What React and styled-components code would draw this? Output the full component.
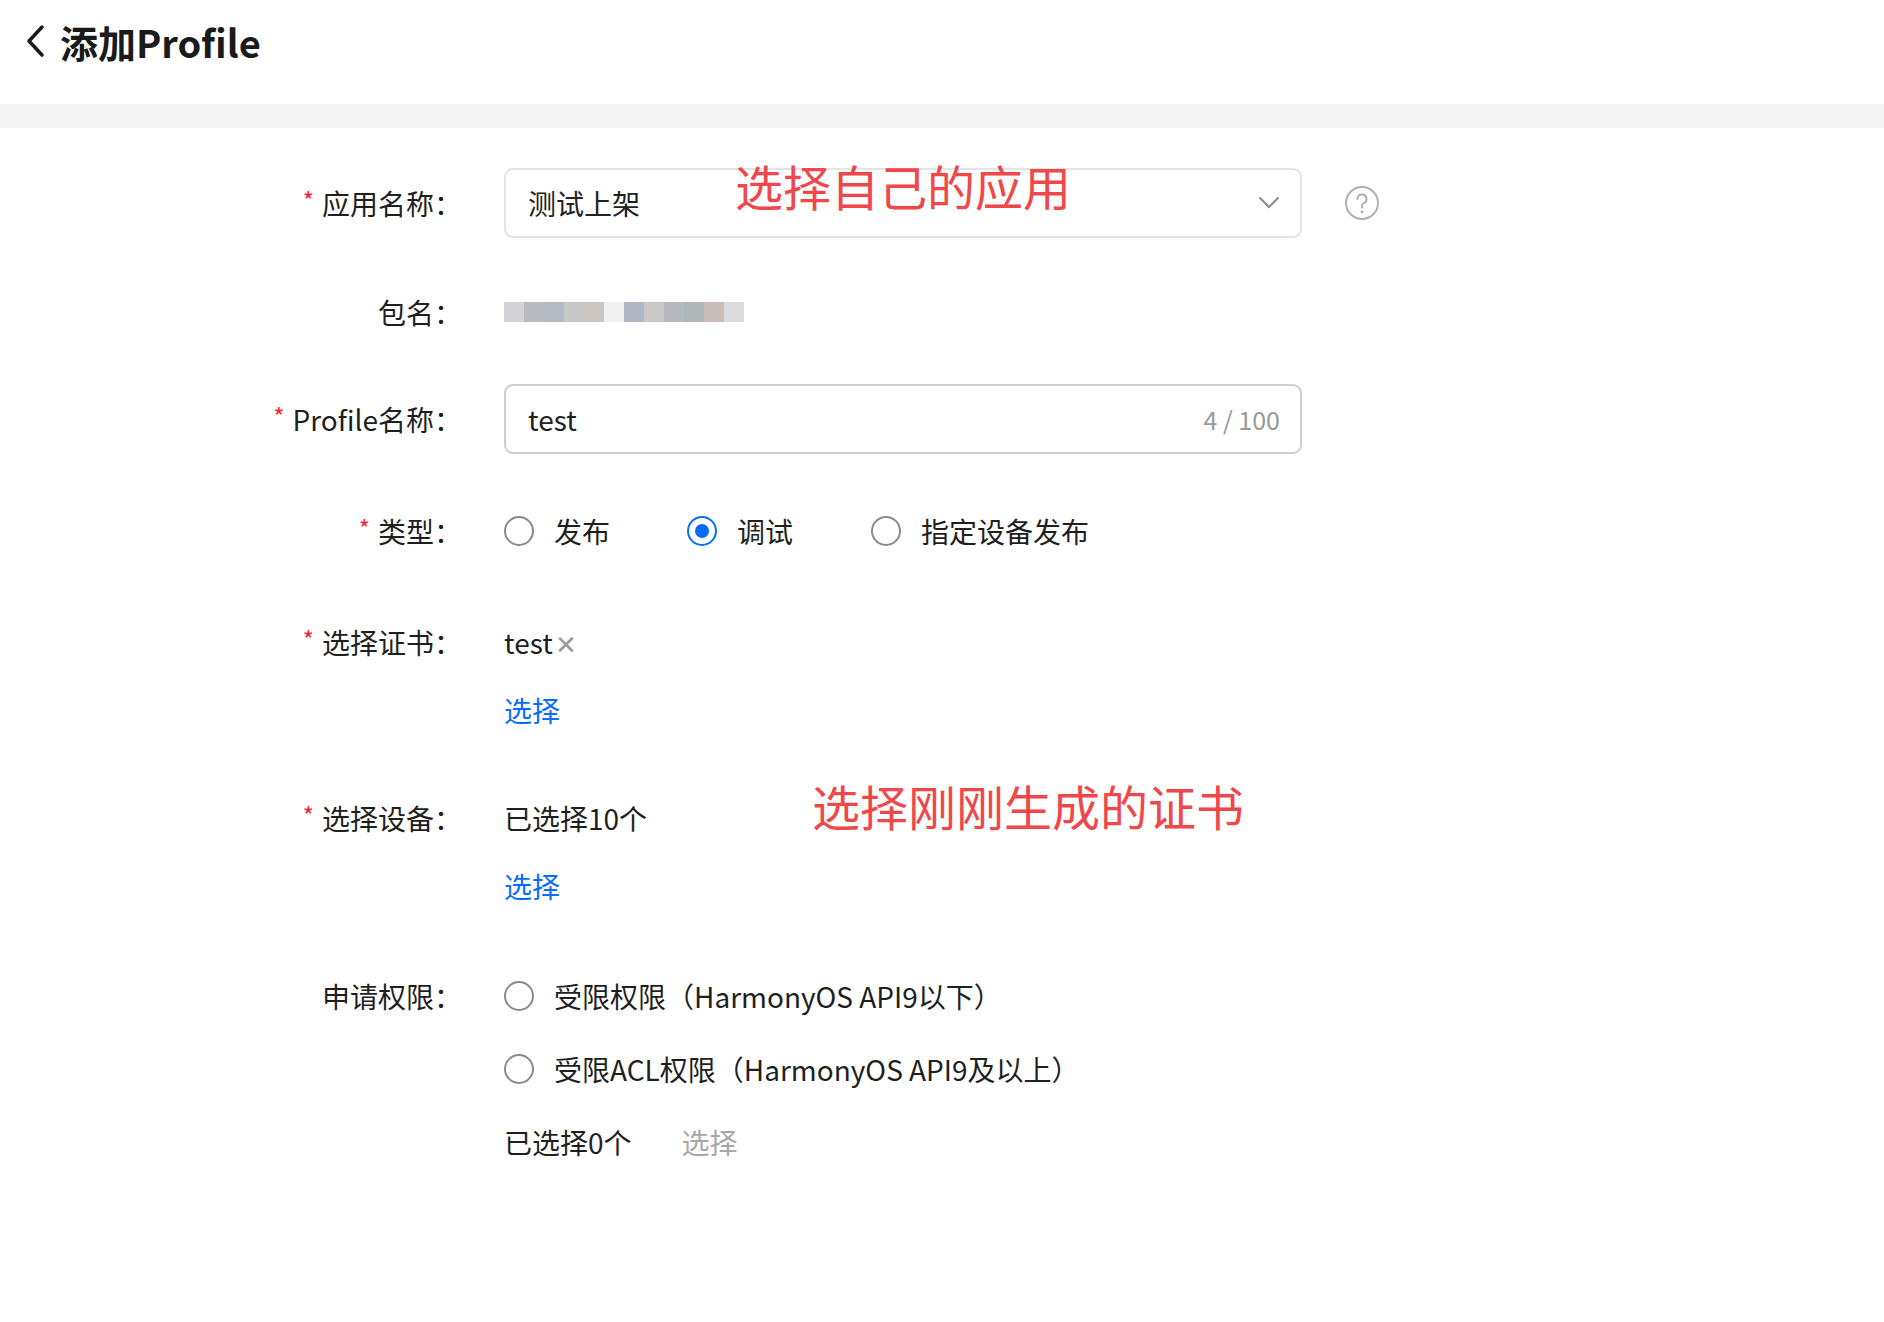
import React from 'react';
import styled, { createGlobalStyle } from 'styled-components';

const Global = createGlobalStyle`
  body {
    margin: 0;
    background: #fff;
    font-family: "Noto Sans CJK SC", "Noto Sans", sans-serif;
    color: #1f1f1f;
  }
`;

const Page = styled.div`
  position: relative;
  width: 1884px;
  height: 1322px;
  overflow: hidden;
`;

const Header = styled.div`
  display: flex;
  align-items: center;
  gap: 14px;
  height: 104px;
  padding-left: 24px;
  padding-bottom: 22px;
  box-sizing: border-box;
`;

const Title = styled.h1`
  margin: 0;
  font-size: 38px;
  font-weight: 700;
  color: #1a1a1a;
`;

const Band = styled.div`
  height: 24px;
  background: #f5f5f5;
`;

const Form = styled.div`
  display: flex;
  flex-direction: column;
  padding-top: 40px;
`;

const Item = styled.div`
  display: grid;
  grid-template-columns: 462px 798px auto;
  column-gap: 42px;
  margin-top: ${p => p.$mt || 0}px;
  font-size: 28px;
`;

const Label = styled.div`
  display: flex;
  justify-content: flex-end;
  align-items: center;
  height: ${p => p.$h || 40}px;
  color: #1f1f1f;
  white-space: nowrap;
`;

const Star = styled.span`
  color: #f5222d;
  font-size: 24px;
  margin-right: 8px;
  position: relative;
  top: -4px;
`;

const Content = styled.div`
  display: flex;
  flex-direction: column;
  gap: ${p => p.$gap || 0}px;
`;

const Line = styled.div`
  display: flex;
  align-items: center;
  height: 40px;
  gap: ${p => p.$gap || 0}px;
`;

const Box = styled.div`
  display: flex;
  align-items: center;
  justify-content: space-between;
  height: 70px;
  box-sizing: border-box;
  border: 2px solid ${p => p.$dark ? '#cfcfcf' : '#e2e4ea'};
  border-radius: 9px;
  padding: 0 20px 0 22px;
  color: #222;
`;

const Counter = styled.span`
  color: #999;
  font-size: 25px;
`;

const Side = styled.div`
  display: flex;
  align-items: center;
  height: 70px;
`;

const Blur = styled.div`
  display: flex;
  height: 20px;
  span { width: 20px; height: 100%; }
`;

const Radio = styled.label`
  display: flex;
  align-items: center;
  gap: 20px;
  min-width: ${p => p.$w || 0}px;
`;

const Circle = styled.span`
  width: 30px;
  height: 30px;
  box-sizing: border-box;
  border-radius: 50%;
  border: 2px solid ${p => p.$on ? '#0a6cff' : '#8a8a8a'};
  display: flex;
  align-items: center;
  justify-content: center;
  &::after {
    content: '';
    display: ${p => p.$on ? 'block' : 'none'};
    width: 14px;
    height: 14px;
    border-radius: 50%;
    background: #0a6cff;
  }
`;

const Link = styled.span`
  color: ${p => p.$muted ? '#a8a8a8' : '#0a6cff'};
`;

const Close = styled.span`
  color: #999;
  font-size: 26px;
  margin-left: 2px;
`;

const Note = styled.div`
  position: absolute;
  left: ${p => p.$x}px;
  top: ${p => p.$y}px;
  color: #f0484a;
  font-size: 48px;
  white-space: nowrap;
`;

const blurColors = ['#d3d3d7', '#b9bac0', '#b5bac4', '#c9c8c9', '#cac6c3', '#f1f1f1', '#b3b7c5', '#cbc9c6', '#b6b9be', '#b0b7bb', '#c9beb7', '#dcdcdc'];

export default function App() {
  return (
    <Page>
      <Global />
      <Header>
        <svg width="22" height="36" viewBox="0 0 22 36" fill="none">
          <path d="M18 4L5 18l13 14" stroke="#1a1a1a" strokeWidth="3.5" strokeLinecap="round" strokeLinejoin="round" />
        </svg>
        <Title>添加Profile</Title>
      </Header>
      <Band />
      <Form>
        <Item>
          <Label $h={70}><Star>*</Star>应用名称：</Label>
          <Box>
            <span>测试上架</span>
            <svg width="22" height="14" viewBox="0 0 22 14" fill="none">
              <path d="M2 2l9 9 9-9" stroke="#8c8c8c" strokeWidth="2" strokeLinecap="round" />
            </svg>
          </Box>
          <Side>
            <svg width="36" height="36" viewBox="0 0 36 36" fill="none">
              <circle cx="18" cy="18" r="16" stroke="#b0b0b0" strokeWidth="2" />
              <path d="M13.5 14a4.5 4.5 0 1 1 6.5 4c-1.4.8-2 1.6-2 3v1.5" stroke="#b0b0b0" strokeWidth="2" strokeLinecap="round" />
              <circle cx="18" cy="27" r="1.4" fill="#b0b0b0" />
            </svg>
          </Side>
        </Item>
        <Item $mt={54}>
          <Label>包名：</Label>
          <Line>
            <Blur>{blurColors.map((c, i) => <span key={i} style={{ background: c }} />)}</Blur>
          </Line>
        </Item>
        <Item $mt={52}>
          <Label $h={70}><Star>*</Star>Profile名称：</Label>
          <Box $dark>
            <span>test</span>
            <Counter>4 / 100</Counter>
          </Box>
        </Item>
        <Item $mt={57}>
          <Label><Star>*</Star>类型：</Label>
          <Line>
            <Radio $w={183}><Circle />发布</Radio>
            <Radio $w={184}><Circle $on />调试</Radio>
            <Radio><Circle />指定设备发布</Radio>
          </Line>
        </Item>
        <Item $mt={71}>
          <Label><Star>*</Star>选择证书：</Label>
          <Content $gap={28}>
            <Line>test<Close>✕</Close></Line>
            <Line><Link>选择</Link></Line>
          </Content>
        </Item>
        <Item $mt={68}>
          <Label><Star>*</Star>选择设备：</Label>
          <Content $gap={28}>
            <Line>已选择10个</Line>
            <Line><Link>选择</Link></Line>
          </Content>
        </Item>
        <Item $mt={70}>
          <Label>申请权限：</Label>
          <Content $gap={33}>
            <Line><Radio><Circle />受限权限（HarmonyOS API9以下）</Radio></Line>
            <Line><Radio><Circle />受限ACL权限（HarmonyOS API9及以上）</Radio></Line>
            <Line $gap={50}>已选择0个<Link $muted>选择</Link></Line>
          </Content>
        </Item>
      </Form>
      <Note $x={735} $y={150}>选择自己的应用</Note>
      <Note $x={812} $y={770}>选择刚刚生成的证书</Note>
    </Page>
  );
}
